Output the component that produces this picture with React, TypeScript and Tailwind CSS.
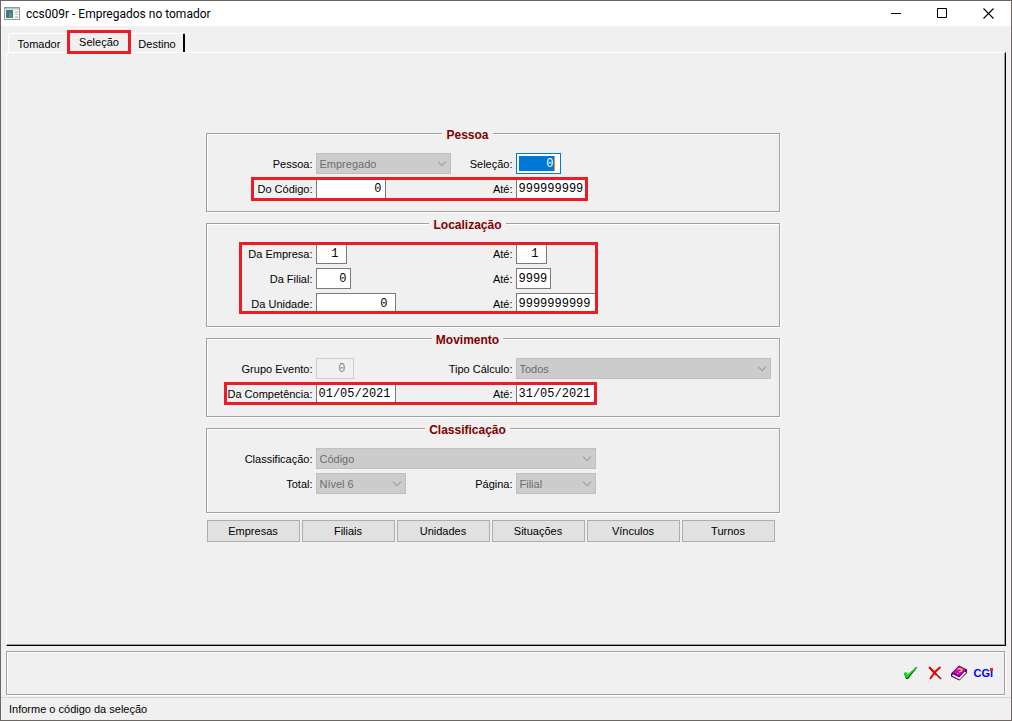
import { useState } from "react";
import type { ReactNode } from "react";
import clsx from "clsx";

type GroupProps = {
  title: string;
  className?: string;
  highlight?: string;
  children: ReactNode;
};

function Group({ title, className, highlight, children }: GroupProps) {
  return (
    <fieldset
      className={clsx(
        "border border-[#a0a0a0] pt-3 pr-[50px] shadow-[1px_1px_0_#fff,inset_1px_1px_0_#fff]",
        className,
      )}
    >
      <legend className="mx-auto h-4 bg-[#f0f0f0] px-1 text-xs font-bold leading-5 text-[#800000]">
        {title}
      </legend>
      <div className="relative grid grid-cols-[106px_135px_59px_80px] items-center gap-x-[3px] gap-y-1">
        {children}
        {highlight && (
          <span
            aria-hidden="true"
            className={clsx(
              "pointer-events-none absolute border-3 border-[#ed1c24]",
              highlight,
            )}
          />
        )}
      </div>
    </fieldset>
  );
}

function Label({ id, children }: { id: string; children: ReactNode }) {
  return (
    <label htmlFor={id} className="justify-self-end whitespace-nowrap">
      {children}
    </label>
  );
}

type TextFieldProps = {
  id: string;
  label: string;
  value: string;
  className: string;
  disabled?: boolean;
};

function TextField({ id, label, value, className, disabled }: TextFieldProps) {
  const [text, setText] = useState(value);
  return (
    <>
      <Label id={id}>{label}</Label>
      <input
        id={id}
        type="text"
        value={text}
        disabled={disabled}
        onChange={(e) => setText(e.target.value)}
        className={clsx(
          "h-[21px] border pl-[2px] font-['Liberation_Mono',monospace] text-xs outline-none",
          disabled
            ? "border-[#cccccc] bg-[#f0f0f0] text-[#838383]"
            : "border-[#7a7a7a] bg-white text-black",
          className,
        )}
      />
    </>
  );
}

type SelectFieldProps = {
  id: string;
  label: string;
  value: string;
  className: string;
};

function SelectField({ id, label, value, className }: SelectFieldProps) {
  return (
    <>
      <Label id={id}>{label}</Label>
      <div className={clsx("relative", className)}>
        <select
          id={id}
          disabled
          className="block h-[21px] w-full appearance-none border border-[#bfbfbf] bg-[#cccccc] pl-[3px] text-[#6d6d6d] opacity-100"
        >
          <option>{value}</option>
        </select>
        <svg
          className="pointer-events-none absolute top-2 right-1 h-[6px] w-[10px]"
          viewBox="0 0 10 6"
          fill="none"
          stroke="#a0a0a0"
          strokeWidth="1.2"
        >
          <path d="M1 .7 5 4.7 9 .7" />
        </svg>
      </div>
    </>
  );
}

function TitleBar() {
  return (
    <header className="flex h-[25px] items-center bg-white pl-[3px] font-['Roboto',sans-serif] text-xs">
      <svg className="h-[14px] w-4" viewBox="0 0 16 14">
        <rect x=".5" y=".5" width="15" height="12" fill="#f4f4f4" stroke="#909aa2" />
        <path d="M1 1h14v1.5H1z" fill="#b8c6d0" />
        <path d="M2 3h7v8H2z" fill="#3b7f78" />
        <path d="M2 3h3v8H2z" fill="#4d6fa8" />
        <path d="M5 6h3v5H5z" fill="#45a55b" />
        <path d="M11 4h3v2h-3zM11 7h3v1h-3zM11 9h3v2h-3z" fill="#c9d2d8" />
      </svg>
      <h1 className="ml-[6px] flex-1">ccs009r - Empregados no tomador</h1>
      <button type="button" aria-label="Minimizar" className="flex h-full w-[46px] items-center justify-center">
        <svg width="11" height="11" viewBox="0 0 11 11" stroke="#000">
          <path d="M0 5.5h10" />
        </svg>
      </button>
      <button type="button" aria-label="Maximizar" className="flex h-full w-[46px] items-center justify-center">
        <svg width="11" height="11" viewBox="0 0 11 11" fill="none" stroke="#000">
          <path d="M.5.5h9v9h-9z" />
        </svg>
      </button>
      <button type="button" aria-label="Fechar" className="flex h-full w-[46px] items-center justify-center">
        <svg width="11" height="11" viewBox="0 0 11 11" stroke="#000" strokeWidth="1.1">
          <path d="M.5.5l10 10M10.5.5l-10 10" />
        </svg>
      </button>
    </header>
  );
}

function Tabs() {
  return (
    <div role="tablist" className="flex h-[19px] pl-[2px]">
      <button
        type="button"
        role="tab"
        aria-selected="false"
        className="w-[59px] rounded-tl-xs border-t border-l border-white pt-px pl-[2px]"
      >
        Tomador
      </button>
      <button
        type="button"
        role="tab"
        aria-selected="true"
        className="z-10 -mt-[3px] h-6 w-16 border-3 border-[#ed1c24] bg-[#f0f0f0]"
      >
        Seleção
      </button>
      <button
        type="button"
        role="tab"
        aria-selected="false"
        className="w-[54px] rounded-tr-xs border-t border-r-2 border-t-white border-r-black pt-px"
      >
        Destino
      </button>
    </div>
  );
}

const filters = ["Empresas", "Filiais", "Unidades", "Situações", "Vínculos", "Turnos"];

function SelectionForm() {
  return (
    <form className="flex w-full max-w-[574px] flex-col gap-[3px]">
      <Group title="Pessoa" className="pb-3" highlight="top-6 left-[44px] h-6 w-[337px]">
        <SelectField id="pessoa" label="Pessoa:" value="Empregado" className="w-[135px]" />
        <Label id="selecao">Seleção:</Label>
        <div className="h-[21px] w-[45px] border border-[#0078d7] bg-white py-[2px] pr-[5px] pl-[2px]">
          <input
            id="selecao"
            type="text"
            defaultValue="0"
            className="block h-[15px] w-full border-r border-[#ff8728] bg-[#0078d7] text-right font-['Liberation_Mono',monospace] text-xs text-white outline-none"
          />
        </div>
        <TextField id="codigo-de" label="Do Código:" value="0" className="w-[70px] pr-[3px] text-right" />
        <TextField id="codigo-ate" label="Até:" value="999999999" className="w-[70px]" />
      </Group>

      <Group title="Localização" className="pb-3" highlight="-top-px left-8 h-[72px] w-[359px]">
        <TextField id="empresa-de" label="Da Empresa:" value="1" className="w-[31px] pr-[7px] text-right" />
        <TextField id="empresa-ate" label="Até:" value="1" className="w-[31px] pr-[7px] text-right" />
        <TextField id="filial-de" label="Da Filial:" value="0" className="w-[35px] pr-[3px] text-right" />
        <TextField id="filial-ate" label="Até:" value="9999" className="w-[35px]" />
        <TextField id="unidade-de" label="Da Unidade:" value="0" className="w-[80px] pr-[7px] text-right" />
        <TextField id="unidade-ate" label="Até:" value="9999999999" className="w-[80px]" />
      </Group>

      <Group title="Movimento" className="pb-3" highlight="top-6 left-[17px] h-[23px] w-[373px]">
        <TextField
          id="grupo"
          label="Grupo Evento:"
          value="0"
          disabled
          className="w-[38px] pr-[7px] text-right"
        />
        <SelectField id="calculo" label="Tipo Cálculo:" value="Todos" className="w-[255px]" />
        <TextField id="competencia-de" label="Da Competência:" value="01/05/2021" className="w-[80px]" />
        <TextField id="competencia-ate" label="Até:" value="31/05/2021" className="w-[80px]" />
      </Group>

      <Group title="Classificação" className="pb-[18px]">
        <SelectField id="classificacao" label="Classificação:" value="Código" className="col-span-3" />
        <SelectField id="total" label="Total:" value="Nível 6" className="w-[90px]" />
        <SelectField id="pagina" label="Página:" value="Filial" className="w-[80px]" />
      </Group>

      <div className="mt-1 flex gap-[2px] pl-px">
        {filters.map((name) => (
          <button
            key={name}
            type="button"
            className="h-[22px] w-[93px] border border-[#adadad] bg-[#e1e1e1]"
          >
            {name}
          </button>
        ))}
      </div>
    </form>
  );
}

function ActionBar() {
  return (
    <div className="mt-[5px] mr-px flex h-[44px] items-center justify-end gap-2 border border-[#a0a0a0] pr-[11px] shadow-[1px_1px_0_#fff,inset_1px_1px_0_#fff]">
      <button type="button" aria-label="Confirmar">
        <svg width="16" height="16" viewBox="0 0 16 16">
          <path d="M1 8.500l2-1 1.500 2.500L13.500 2h1L5 14H3z" fill="#003c00" />
          <path d="M1 8l2-1 1.500 3L13 2h1L4.500 13H3z" fill="#00e800" />
        </svg>
      </button>
      <button type="button" aria-label="Cancelar">
        <svg width="16" height="16" viewBox="0 0 16 16" fill="none">
          <path d="M2 2l4 4 8 8" stroke="#900000" strokeWidth="1.500" />
          <path d="M2.500 2.500l7 7.500M13.500 2L8 7l-5 7" stroke="#f00000" strokeWidth="2" />
        </svg>
      </button>
      <button type="button" aria-label="Ajuda">
        <svg width="16" height="16" viewBox="0 0 16 16">
          <path d="M0 8.500L8 .5 16 4.500v3.500L8.500 15.500 0 11.500z" fill="#500050" />
          <path d="M1.500 10l7 3.500 6-6.500" fill="none" stroke="#fff" strokeWidth="1.800" />
          <path d="M1.500 7.500L8 1.500 14.500 4.500 8.500 11z" fill="#d000d0" />
          <path d="M6.500 4.500l2-1 2.500 1-.5 1.500L8 7M7 8.500l-1 .5" fill="none" stroke="#ffe800" strokeWidth="1.300" />
        </svg>
      </button>
      <button
        type="button"
        className="relative -ml-[2px] font-['Liberation_Sans',sans-serif] text-[11px] leading-4 font-bold text-[#0000ff]"
      >
        CGi
        <span className="absolute top-[3px] right-0 size-[3px] bg-[#ff2000]" />
      </button>
    </div>
  );
}

export default function App() {
  return (
    <div className="flex min-h-screen w-full flex-col border border-[#6b6662] bg-[#f0f0f0] font-['Liberation_Sans',Arial,sans-serif] text-[11px] leading-4 text-black">
      <TitleBar />
      <main className="flex flex-1 flex-col px-[5px] pt-[7px] pb-[2px]">
        <Tabs />
        <section className="flex flex-1 justify-center border border-t-white border-r-black border-b-black border-l-white pt-[72px] pr-[27px] shadow-[inset_-1px_-1px_0_#a0a0a0]">
          <SelectionForm />
        </section>
        <ActionBar />
      </main>
      <footer className="flex h-[23px] items-center border-t border-[#d7d7d7] pl-2">
        Informe o código da seleção
      </footer>
    </div>
  );
}
